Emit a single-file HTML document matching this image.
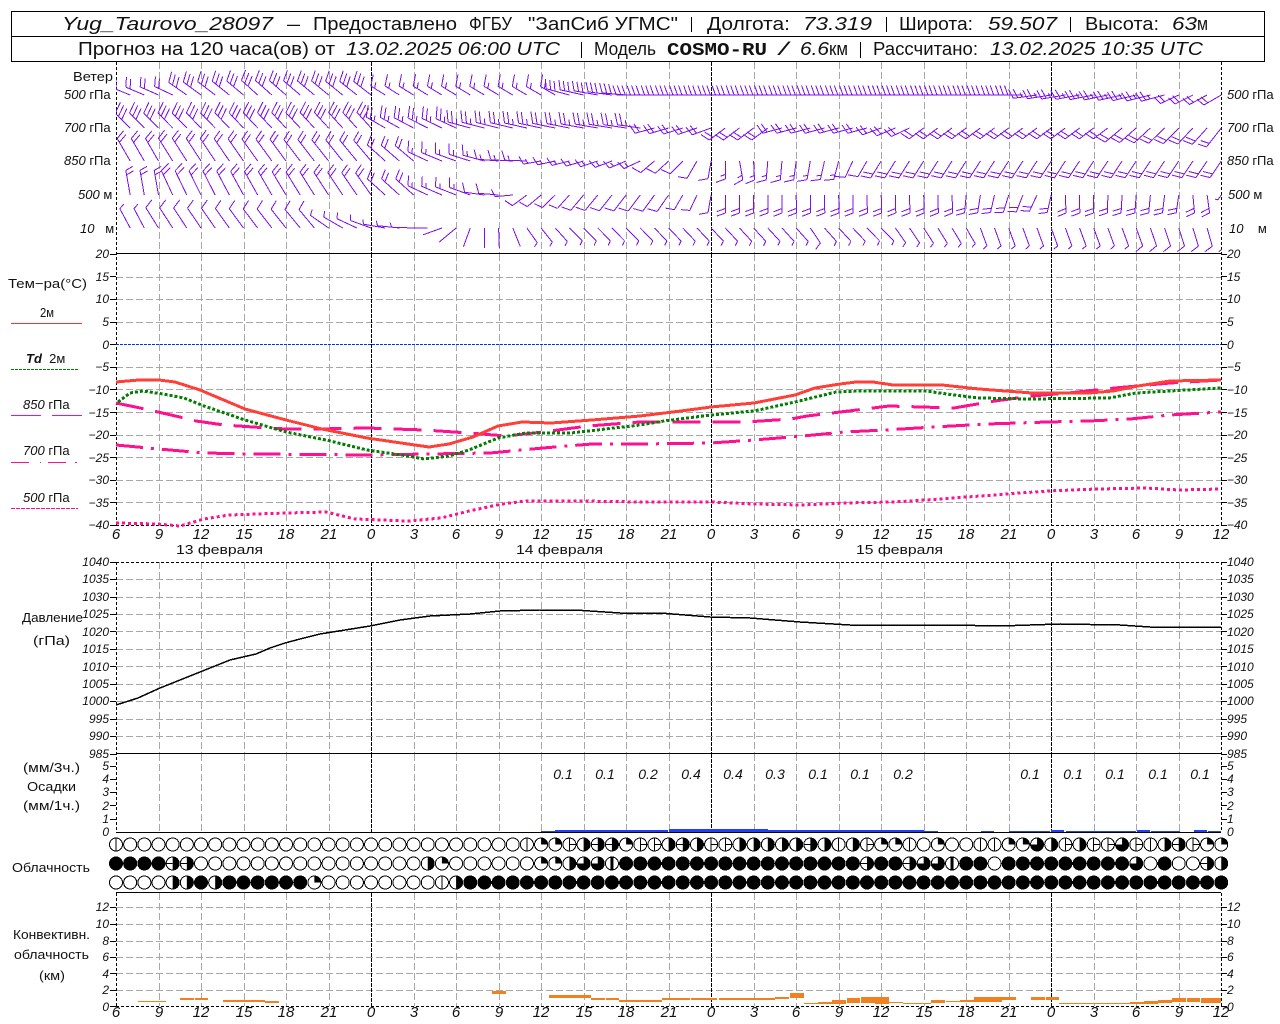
<!DOCTYPE html>
<html lang="ru"><head><meta charset="utf-8"><title>Yug_Taurovo_28097</title>
<style>
html,body{margin:0;padding:0;background:#fff}
svg{display:block}
text{font-family:"Liberation Sans","DejaVu Sans",sans-serif;fill:#111}
.i{font-style:italic}
.t{font-size:18px}
.b{font-family:"Liberation Mono",monospace;font-weight:bold;font-size:18px}
.s{font-size:13px}
.y text{font-size:12px;font-style:italic}
.yl text{text-anchor:end}
.x text{font-size:15px;font-style:italic;text-anchor:middle}
.c{text-anchor:middle}
.p text{font-size:14px;font-style:italic;text-anchor:middle}
polyline{fill:none;shape-rendering:crispEdges}
</style></head><body>
<svg id="s" xmlns="http://www.w3.org/2000/svg" width="1280" height="1024" viewBox="0 0 1280 1024">
<defs><clipPath id="wc"><rect x="116" y="60" width="1106" height="195"/></clipPath></defs>
<rect width="1280" height="1024" fill="#fff"/>
<g id="grid"></g><g id="wind" clip-path="url(#wc)"></g><g id="bars"></g><g id="cloud"></g>
<path d="M11.5 11.5H1264.5V61.5H11.5ZM11.5 36.5H1264.5" fill="none" stroke="#000" shape-rendering="crispEdges"/>
<path d="M691.5 17V32M886.5 17V32M1070.5 17V32M581.5 42V58M860.5 42V58" stroke="#000" shape-rendering="crispEdges"/>
<text class="t i" x="62" y="30" textLength="211">Yug_Taurovo_28097</text>
<text class="t" x="287" y="30" textLength="13">—</text>
<text class="t" x="313" y="30" textLength="144">Предоставлено</text>
<text class="t" x="469" y="30" textLength="43">ФГБУ</text>
<text class="t" x="528" y="30" textLength="150">"ЗапСиб УГМС"</text>
<text class="t" x="707" y="30" textLength="83">Долгота:</text>
<text class="t i" x="803" y="30" textLength="69">73.319</text>
<text class="t" x="899" y="30" textLength="74">Широта:</text>
<text class="t i" x="988" y="30" textLength="69">59.507</text>
<text class="t" x="1085" y="30" textLength="74">Высота:</text>
<text class="t i" x="1172" y="30" textLength="25">63</text>
<text class="t" x="1197" y="30" textLength="11">м</text>
<text class="t" x="78" y="55" textLength="257">Прогноз на 120 часа(ов) от</text>
<text class="t i" x="346" y="55" textLength="214">13.02.2025 06:00 UTC</text>
<text class="t" x="594" y="55" textLength="62">Модель</text>
<text class="b" x="667" y="55" textLength="100">COSMO-RU</text>
<text class="t i" x="779" y="55" textLength="9">/</text>
<text class="t i" x="800" y="55" textLength="29">6.6</text>
<text class="t" x="829" y="55" textLength="19">км</text>
<text class="t" x="873" y="55" textLength="105">Рассчитано:</text>
<text class="t i" x="990" y="55" textLength="213">13.02.2025 10:35 UTC</text>

<text class="s" x="73" y="81" textLength="40">Ветер</text>
<g class="s">
<text x="64" y="99"><tspan class="i">500</tspan> гПа</text>
<text x="64" y="132"><tspan class="i">700</tspan> гПа</text>
<text x="64" y="165"><tspan class="i">850</tspan> гПа</text>
<text x="78" y="199"><tspan class="i">500</tspan> м</text>
<text x="80" y="233"><tspan class="i">10</tspan>&#160;&#160; м</text>
<text x="1227" y="99"><tspan class="i">500</tspan> гПа</text>
<text x="1227" y="132"><tspan class="i">700</tspan> гПа</text>
<text x="1227" y="165"><tspan class="i">850</tspan> гПа</text>
<text x="1228" y="199"><tspan class="i">500</tspan> м</text>
<text x="1229" y="233"><tspan class="i">10</tspan>&#160;&#160;&#160; м</text>
</g>
<g class="s">
<text x="8" y="288" textLength="79">Тем−ра(°C)</text>
<text x="40" y="317" textLength="14">2м</text>
<text x="26" y="363"><tspan class="i" font-weight="bold">Td</tspan>&#160; 2м</text>
<text x="23" y="409"><tspan class="i">850</tspan> гПа</text>
<text x="23" y="455"><tspan class="i">700</tspan> гПа</text>
<text x="23" y="502"><tspan class="i">500</tspan> гПа</text>
<text x="22" y="622" textLength="61">Давление</text>
<text x="33" y="645" textLength="37">(гПа)</text>
<text x="23" y="772" textLength="57">(мм/3ч.)</text>
<text x="27" y="791" textLength="49">Осадки</text>
<text x="23" y="810" textLength="57">(мм/1ч.)</text>
<text x="12" y="872" textLength="78">Облачность</text>
<text x="13" y="939" textLength="77">Конвективн.</text>
<text x="14" y="959" textLength="75">облачность</text>
<text x="39" y="980" textLength="26">(км)</text>
</g>
<g stroke-width="1" shape-rendering="crispEdges">
<path d="M11 323.5H82" stroke="#ff3030"/>
<path d="M11 369.5H78" stroke="#008000" stroke-dasharray="3 1"/>
<path d="M11 415.5H41M52 415.5H82" stroke="#ff1090"/>
<path d="M11 462.5H29M40 462.5H41M48 462.5H66M75 462.5H77" stroke="#ff1090"/>
<path d="M11 508.5H78" stroke="#ff1090" stroke-dasharray="4 1"/>
</g>

<polyline stroke="#0030ff" stroke-dasharray="3 1" points="116,344.5 1221,344.5"/>
<polyline stroke="#ff1090" stroke-width="3" stroke-dasharray="3 3" points="116,523 157,524 180,526 204,519 229,515 286,513 326,512 355,519 408,521 441,518 469,511 502,504 526,501 584,501 640,502 711,502 754,504 803,505 844,503 893,502 926,500 967,497 1007,494 1048,491 1097,489 1146,488 1179,490 1221,489"/>
<polyline stroke="#ff1090" stroke-width="3" stroke-dasharray="27 8 3 8" points="116,445 159,449 204,453 253,454 367,455 428,454 490,453 543,448 592,444 640,444 711,443 754,440 803,436 844,432 885,430 934,427 987,424 1048,422 1089,421 1130,419 1170,415 1221,412"/>
<polyline stroke="#ff1090" stroke-width="3" stroke-dasharray="28 12" points="116,403 145,409 184,418 196,421 224,425 253,427 286,429 318,429 367,428 424,430 469,433 506,436 543,432 588,426 640,422 711,422 746,422 791,419 807,416 832,413 873,408 889,406 954,408 995,401 1032,396 1068,393 1115,388 1170,383 1221,380"/>
<polyline stroke="#008000" stroke-width="3" stroke-dasharray="3 2" points="118,402 130,393 143,391 163,394 184,398 204,406 245,420 286,432 326,440 367,450 408,456 424,459 449,456 469,450 498,438 526,433 571,433 640,425 664,421 711,415 754,411 795,402 836,392 860,391 926,391 954,395 979,398 1028,399 1109,398 1136,393 1170,391 1221,388"/>
<polyline stroke="#ff4038" stroke-width="3" points="116,382 139,380 159,380 175,382 200,390 245,409 286,420 322,429 367,438 408,444 429,447 449,444 473,437 498,426 522,422 551,423 592,420 640,416 681,411 711,407 754,403 795,395 815,388 840,384 856,382 873,382 893,385 942,385 979,389 1032,393 1089,393 1113,391 1138,386 1170,381 1221,380"/>
<polyline stroke="#000" stroke-width="1.5" points="116,705 138,698 160,688 180,680 200,672 215,666 230,660 256,654 270,648 285,643 300,639 320,634 345,630 370,626 385,623 400,620 430,616 470,614 500,611 540,610 575,610 620,613 660,613 685,615 710,617 750,618 800,622 850,625 900,625 950,625 1000,626 1060,624 1120,625 1150,627 1221,627"/>

<g class="y yl">
<text x="109" y="258">20</text><text x="109" y="281">15</text><text x="109" y="303">10</text><text x="109" y="326">5</text><text x="109" y="349">0</text><text x="109" y="371">−5</text><text x="109" y="394">−10</text><text x="109" y="417">−15</text><text x="109" y="439">−20</text><text x="109" y="462">−25</text><text x="109" y="484">−30</text><text x="109" y="507">−35</text><text x="109" y="529">−40</text>
<text x="109" y="566">1040</text><text x="109" y="583">1035</text><text x="109" y="601">1030</text><text x="109" y="618">1025</text><text x="109" y="636">1020</text><text x="109" y="653">1015</text><text x="109" y="671">1010</text><text x="109" y="688">1005</text><text x="109" y="705">1000</text><text x="109" y="723">995</text><text x="109" y="740">990</text><text x="109" y="758">985</text>
<text x="109" y="770">5</text><text x="109" y="783">4</text><text x="109" y="796">3</text><text x="109" y="810">2</text><text x="109" y="823">1</text><text x="109" y="836">0</text>
<text x="109" y="911">12</text><text x="109" y="928">10</text><text x="109" y="945">8</text><text x="109" y="961">6</text><text x="109" y="978">4</text><text x="109" y="994">2</text><text x="109" y="1011">0</text>
</g>
<g class="y">
<text x="1227" y="258">20</text><text x="1227" y="281">15</text><text x="1227" y="303">10</text><text x="1227" y="326">5</text><text x="1227" y="349">0</text><text x="1227" y="371">−5</text><text x="1227" y="394">−10</text><text x="1227" y="417">−15</text><text x="1227" y="439">−20</text><text x="1227" y="462">−25</text><text x="1227" y="484">−30</text><text x="1227" y="507">−35</text><text x="1227" y="529">−40</text>
<text x="1227" y="566">1040</text><text x="1227" y="583">1035</text><text x="1227" y="601">1030</text><text x="1227" y="618">1025</text><text x="1227" y="636">1020</text><text x="1227" y="653">1015</text><text x="1227" y="671">1010</text><text x="1227" y="688">1005</text><text x="1227" y="705">1000</text><text x="1227" y="723">995</text><text x="1227" y="740">990</text><text x="1227" y="758">985</text>
<text x="1227" y="770">5</text><text x="1227" y="783">4</text><text x="1227" y="796">3</text><text x="1227" y="810">2</text><text x="1227" y="823">1</text><text x="1227" y="836">0</text>
<text x="1227" y="911">12</text><text x="1227" y="928">10</text><text x="1227" y="945">8</text><text x="1227" y="961">6</text><text x="1227" y="978">4</text><text x="1227" y="994">2</text><text x="1227" y="1011">0</text>
</g>
<g class="x">
<text x="116" y="539">6</text><text x="159" y="539">9</text><text x="201" y="539">12</text><text x="244" y="539">15</text><text x="286" y="539">18</text><text x="329" y="539">21</text><text x="371" y="539">0</text><text x="414" y="539">3</text><text x="456" y="539">6</text><text x="499" y="539">9</text><text x="541" y="539">12</text><text x="584" y="539">15</text><text x="626" y="539">18</text><text x="669" y="539">21</text><text x="711" y="539">0</text><text x="754" y="539">3</text><text x="796" y="539">6</text><text x="839" y="539">9</text><text x="881" y="539">12</text><text x="924" y="539">15</text><text x="966" y="539">18</text><text x="1009" y="539">21</text><text x="1051" y="539">0</text><text x="1094" y="539">3</text><text x="1136" y="539">6</text><text x="1179" y="539">9</text><text x="1221" y="539">12</text>
<text x="116" y="1017">6</text><text x="159" y="1017">9</text><text x="201" y="1017">12</text><text x="244" y="1017">15</text><text x="286" y="1017">18</text><text x="329" y="1017">21</text><text x="371" y="1017">0</text><text x="414" y="1017">3</text><text x="456" y="1017">6</text><text x="499" y="1017">9</text><text x="541" y="1017">12</text><text x="584" y="1017">15</text><text x="626" y="1017">18</text><text x="669" y="1017">21</text><text x="711" y="1017">0</text><text x="754" y="1017">3</text><text x="796" y="1017">6</text><text x="839" y="1017">9</text><text x="881" y="1017">12</text><text x="924" y="1017">15</text><text x="966" y="1017">18</text><text x="1009" y="1017">21</text><text x="1051" y="1017">0</text><text x="1094" y="1017">3</text><text x="1136" y="1017">6</text><text x="1179" y="1017">9</text><text x="1221" y="1017">12</text>
</g>
<text class="s" x="176" y="554" textLength="87">13 февраля</text>
<text class="s" x="516" y="554" textLength="87">14 февраля</text>
<text class="s" x="856" y="554" textLength="87">15 февраля</text>
<g class="p">
<text x="563" y="779">0.1</text><text x="605" y="779">0.1</text><text x="648" y="779">0.2</text><text x="691" y="779">0.4</text><text x="733" y="779">0.4</text><text x="775" y="779">0.3</text><text x="818" y="779">0.1</text><text x="860" y="779">0.1</text><text x="903" y="779">0.2</text><text x="1030" y="779">0.1</text><text x="1073" y="779">0.1</text><text x="1115" y="779">0.1</text><text x="1158" y="779">0.1</text><text x="1200" y="779">0.1</text>
</g>
</svg>
<script>
(function(){
var NS="http://www.w3.org/2000/svg";
var tl=document.querySelectorAll("text[textLength]");
for(var n=0;n<tl.length;n++)tl[n].setAttribute("lengthAdjust","spacingAndGlyphs");
function el(parent,n,a){var e=document.createElementNS(NS,n);for(var k in a)e.setAttribute(k,a[k]);document.getElementById(parent).appendChild(e);return e;}
function P(parent,d,stroke,extra){var a={d:d,stroke:stroke,fill:"none","shape-rendering":"crispEdges"};for(var k in extra||{})a[k]=extra[k];return el(parent,"path",a);}
function X(i){return 116+i*14.17;}
var panels=[[62,253],[254,525],[562,753],[754,832],[893,1006]],g="",d="";
for(var h=3;h<78;h+=3){var x=Math.round(X(h))+.5;
 if((h-18)%24==0)continue;
 panels.forEach(function(p){g+="M"+x+" "+p[0]+"V"+p[1];});}
[276.5,299,322,367,389,412,435,457,480,502,579,597,614,631,649,666,684,701,719,736,907,924,941,957,973,990].forEach(function(r){
 g+="M116 "+(Math.round(r)+.5)+"H1221";});
P("grid",g,"#a8a8a8",{"stroke-dasharray":"7 3"});
[18,42,66].forEach(function(h){var x=Math.round(X(h))+.5;
 panels.forEach(function(p){d+="M"+x+" "+p[0]+"V"+p[1];});});
P("grid",d,"#000",{"stroke-dasharray":"4 1"});
var ax="";[116.5,1221.5].forEach(function(x){[[62,525],[562,832],[893,1006]].forEach(function(p){ax+="M"+x+" "+p[0]+"V"+p[1];});});
ax+="M116 525.5H1221M116 562.5H1221M116 1006.5H1221";
P("grid",ax,"#000",{"stroke-dasharray":"3 2"});
P("grid","M116 253.5H1221M116 753.5H1221M116 832.5H1221M116 892.5H1221","#000");
var t="";
[254,276,299,322,344,367,389,412,435,457,480,502,525,562,579,597,614,631,649,666,684,701,719,736,754,766,779,792,805,819,907,924,941,957,973,990,1006].forEach(function(y){
 t+="M110 "+(y+.5)+"H116M1221 "+(y+.5)+"H1227";});
P("grid",t,"#000");

var rows=[
[95,[[1,4,-158,-155,2,10,20],[5,9,-145,-140,3,11,22],[10,18,-138,-142,3,11,22],[19,31,-148,-150,1.5,12,17],[32,36,-165,-175,3,10,24],[37,64,-180,-180,3,10,24],[65,74,-188,-195,2.5,10,24],[75,78,-205,-210,2,9,20]]],
[128,[[1,18,-135,-132,3,12,21],[19,24,-150,-155,2.5,12,22],[25,37,-165,-172,2.5,12,23],[38,42,-195,-200,2,10,20],[43,46,-217,-217,2,10,20],[47,53,-195,-195,2,10,20],[54,56,-200,-205,2,10,20],[57,70,-217,-217,2,10,18],[71,77,-220,-228,2,10,22],[78,78,-232,-232,2,9,24]]],
[161,[[1,3,-120,-120,2,10,26],[4,18,-122,-130,2,10,27],[19,21,-138,-140,2,10,24],[22,26,-155,-165,1.5,11,22],[27,29,-175,-178,1.5,10,22],[30,37,-190,-205,1.5,9,18],[38,40,-220,-225,1,10,18],[41,41,-240,-240,1,9,20],[42,42,-260,-260,1,10,18],[43,43,-270,-270,1.5,10,18],[44,46,-280,-265,1.5,10,19],[47,51,-265,-255,1.5,10,19],[52,53,-245,-240,1,10,18],[54,78,-238,-236,2,10,20]]],
[195,[[1,3,-100,-100,2,8,25],[4,18,-115,-125,2,10,27],[19,21,-138,-138,2,10,24],[22,25,-155,-160,1.5,10,22],[26,27,-172,-175,1,10,20],[28,28,-185,-185,1,8,18],[29,32,-216,-228,1,9,18],[33,39,-230,-235,1,10,20],[40,41,-240,-245,1,9,17],[42,42,-260,-260,1,9,18],[43,59,-270,-272,2,9,18],[60,65,-265,-245,2,9,18],[66,66,-257,-257,2,9,18],[67,75,-272,-262,2,9,18],[76,77,-275,-278,2,9,18],[78,78,-235,-235,1,3,6]]],
[228,[[0,0,-180,-180,0,0,2],[1,2,-118,-118,1,6,22],[3,14,-122,-130,1,10,24],[15,18,-145,-160,1,6,22],[19,21,-170,-178,1,5,22],[22,22,-180,-180,0,0,18],[23,23,-200,-200,0,0,20],[24,24,-220,-220,0,0,22],[25,25,-250,-250,0,0,20],[26,26,-270,-270,0,0,20],[27,27,-272,-272,0,0,20],[28,28,-292,-292,0,0,20],[29,31,-305,-312,1,5,18],[32,48,-315,-312,1,5,18],[49,49,-304,-304,1,8,18],[50,54,-312,-315,1,5,18],[55,60,-305,-300,1,5,18],[61,71,-290,-290,1,5,19],[72,78,-290,-285,1,9,19]]]];
var w="";
rows.forEach(function(r){var y=r[0];r[1].forEach(function(s){
 for(var i=s[0];i<=s[1];i++){
  var f=s[1]==s[0]?0:(i-s[0])/(s[1]-s[0]),th=(s[2]+(s[3]-s[2])*f)*Math.PI/180,L=s[6],x=X(i);
  var tx=x+L*Math.cos(th),ty=y+L*Math.sin(th);
  w+="M"+x.toFixed(1)+" "+y+"L"+tx.toFixed(1)+" "+ty.toFixed(1);
  var fh=th+70*Math.PI/180,n=s[4],k=0;
  while(n>0.01){
   var len=n>=1?s[5]:s[5]*.5;
   var bx=tx-k*4.5*Math.cos(th),by=ty-k*4.5*Math.sin(th);
   w+="M"+bx.toFixed(1)+" "+by.toFixed(1)+"l"+(len*Math.cos(fh)).toFixed(1)+" "+(len*Math.sin(fh)).toFixed(1);
   n-=1;k++;
  }
 }
});});
P("wind",w,"#7f10e8");

function rect(id,x1,x2,y1,y2,c){el(id,"rect",{x:x1,y:y1,width:x2-x1,height:y2-y1,fill:c,"shape-rendering":"crispEdges"});}
[[541,555,831,832],[555,668,830,832],[669,768,829,832],[768,924,830,832],[924,938,831,832],[981,994,831,832],[1009,1050,831,832],[1051,1064,830,832],[1066,1136,831,832],[1137,1150,830,832],[1151,1180,831,832],[1194,1207,830,832],[1208,1221,831,832]].forEach(function(b){rect("bars",b[0],b[1],b[2],b[3],"#1f3fff");});
[[138,166,1001,1002],[180,194,998,1000],[195,208,998,1000],[223,265,1000,1002],[265,279,1001,1003],[492,506,991,994],[549,591,995,998],[591,605,998,1000],[606,619,998,1000],[619,662,1000,1002],[662,690,998,1000],[691,717,998,1000],[719,775,998,1000],[775,789,997,999],[790,804,993,998],[804,818,1003,1004],[818,832,1002,1004],[832,846,1000,1004],[847,860,998,1003],[861,875,997,1003],[875,889,997,1004],[889,903,1002,1003],[903,931,1003,1004],[931,945,1000,1003],[946,960,1001,1002],[960,974,1000,1002],[974,1002,997,1002],[1002,1016,997,1000],[1031,1045,997,1000],[1046,1059,997,1000],[1059,1130,1003,1004],[1130,1144,1002,1004],[1144,1158,1001,1004],[1158,1172,1000,1003],[1172,1186,998,1002],[1187,1200,998,1002],[1201,1221,998,1003]].forEach(function(b){rect("bars",b[0],b[1],b[2],b[3],"#f08020");});

var e=function(n){return Array(n+1).join("e")},f=function(n){return Array(n+1).join("f")};
var r1="v"+e(28)+"vqqThXXqTThXhTThhhhhXhvhTqqveqeevvqqdhThTTdTvhXTqq";
var r2=f(4)+"XX"+e(16)+"hq"+e(6)+"qqhddB"+f(17)+"Xff"+"XddBff"+"o"+f(9)+"dofooXh";
var r3=e(4)+"hhfh"+f(6)+"q"+e(8)+"vh"+f(54);
function cloud(str,y){
 for(var i=0;i<79;i++){var c=str.charAt(i)||"f",x=X(i),R=6.5;
  var o={cx:x,cy:y,r:R,fill:"#fff",stroke:"#000","shape-rendering":"crispEdges"};
  if(c=="f")o.fill="#000";
  el("cloud","circle",o);
  var half="M"+x+" "+(y-R)+"A"+R+" "+R+" 0 0 1 "+x+" "+(y+R)+"Z";
  var qtr="M"+x+" "+y+"V"+(y-R)+"A"+R+" "+R+" 0 0 1 "+(x+R)+" "+y+"Z";
  var three="M"+x+" "+y+"V"+(y-R)+"A"+R+" "+R+" 0 1 1 "+(x-R)+" "+y+"Z";
  var fill=function(dd){el("cloud","path",{d:dd,fill:"#000"});};
  if(c=="h"||c=="X")fill(half);
  if(c=="q")fill(qtr);
  if(c=="d")fill(three);
  var line=function(dd){el("cloud","path",{d:dd,stroke:"#000",fill:"none","shape-rendering":"crispEdges"});};
  if(c=="v")line("M"+x+" "+(y-R)+"V"+(y+R));
  if(c=="X")line("M"+(x-R)+" "+y+"H"+x);
  if(c=="T")line("M"+x+" "+(y-R)+"V"+(y+R)+"M"+x+" "+y+"H"+(x+R));
  if(c=="B")el("cloud","rect",{x:x-1.5,y:y-R,width:3,height:2*R,fill:"#000"});
  if(c=="o")el("cloud","ellipse",{cx:x,cy:y,rx:2.5,ry:5.5,fill:"#fff"});
 }
}
cloud(r1,844.5);cloud(r2,863.5);cloud(r3,882.5);
})();
</script>
</body></html>
